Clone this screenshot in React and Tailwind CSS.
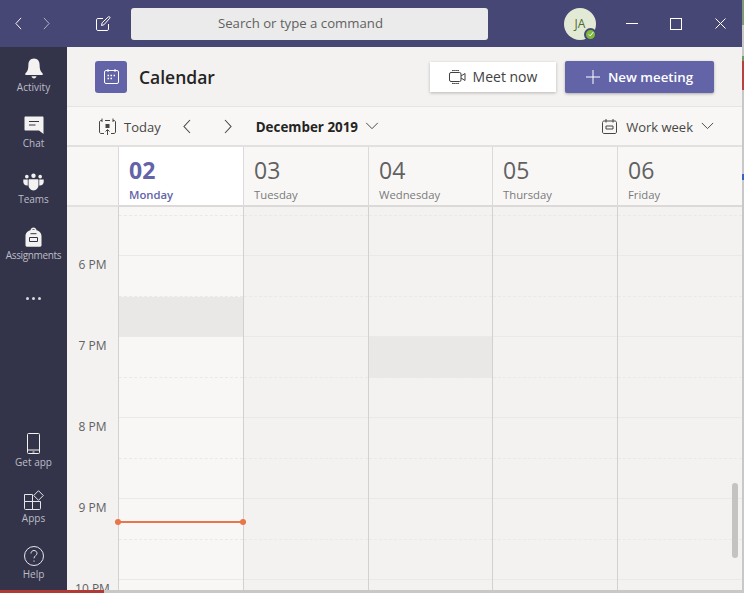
import React from 'react';

const rows = [
  { h: 'h-[9px]', line: 'border-dashed' },
  { h: 'h-[40px]', line: 'border-solid' },
  { h: 'h-[40.5px]', line: 'border-dashed', label: '6 PM' },
  { h: 'h-[40.5px]', line: 'border-solid' },
  { h: 'h-[40.5px]', line: 'border-dashed', label: '7 PM' },
  { h: 'h-[40.5px]', line: 'border-solid' },
  { h: 'h-[40.5px]', line: 'border-dashed', label: '8 PM' },
  { h: 'h-[40.5px]', line: 'border-solid' },
  { h: 'h-[40.5px]', line: 'border-dashed', label: '9 PM' },
  { h: 'h-[40.5px]', line: 'border-solid' },
  { h: 'h-[40.5px]', line: 'border-dashed', label: '10 PM' },
];

const days = [
  { num: '02', name: 'Monday', today: true, busy: 3 },
  { num: '03', name: 'Tuesday' },
  { num: '04', name: 'Wednesday', busy: 4 },
  { num: '05', name: 'Thursday' },
  { num: '06', name: 'Friday' },
];

const Chevron = ({ dir = 'down', className = '' }) => {
  const d = {
    left: 'M7 1 L1 7.5 L7 14',
    right: 'M1 1 L7 7.5 L1 14',
    down: 'M1 1 L7.5 7.5 L14 1',
  }[dir];
  const box = dir === 'down' ? '0 0 15 9' : '0 0 8 15';
  return (
    <svg viewBox={box} fill="none" stroke="currentColor" strokeWidth="1.1" className={className}>
      <path d={d} />
    </svg>
  );
};

const BellIcon = () => (
  <svg viewBox="0 0 20 21" className="w-[20px] h-[21px]" fill="#f3f2f1">
    <path d="M10 0.5c-3.6 0-5.6 2.8-5.6 6.3 0 3.6-.6 6.2-2.4 8 -.6.6-.9 1.1-.9 1.5 0 .5.4.7 1 .7h15.8c.6 0 1-.2 1-.7 0-.4-.3-.9-.9-1.5-1.8-1.8-2.4-4.4-2.4-8C15.6 3.3 13.6.5 10 .5z" />
    <path d="M7.5 18.2h5c-.3 1.3-1.3 2.2-2.5 2.2s-2.2-.9-2.5-2.2z" />
  </svg>
);

const ChatIcon = () => (
  <svg viewBox="0 0 20 19" className="w-[20px] h-[19px]">
    <path fill="#f3f2f1" d="M1.5 0.5h17c.6 0 1 .4 1 1v16.5l-4.5-3.5H1.5c-.6 0-1-.4-1-1v-12c0-.6.4-1 1-1z" />
    <path stroke="#33344a" strokeWidth="1.1" d="M5 5.5h10M5 9h6.5" />
  </svg>
);

const TeamsIcon = () => (
  <svg viewBox="0 0 22 18" className="w-[21px] h-[18px]" fill="#f3f2f1">
    <circle cx="11" cy="2.4" r="2.3" />
    <circle cx="4" cy="3.4" r="1.9" />
    <circle cx="18" cy="3.4" r="1.9" />
    <path d="M6.5 6h9c.4 0 .7.3.7.7v5.8c0 3-2.300 5.300-5.200 5.300s-5.200-2.300-5.200-5.300V6.700c0-.4.3-.7.7-.7z" />
    <path d="M.5 6.500h4.500v6.200c-2.700.4-4.700-1.500-4.700-3.900V6.700zM17 6.500h4.700v2.300c0 2.400-2 4.300-4.700 3.900z" />
  </svg>
);

const BagIcon = () => (
  <svg viewBox="0 0 17 20" className="w-[17px] h-[20px]">
    <path fill="#f3f2f1" d="M5.500 3.200C5.800 1.500 7 .5 8.500.5s2.700 1 3 2.700c2.600.8 5 2.600 5 5.800v9.300c0 .9-.6 1.400-1.400 1.400H1.900c-.8 0-1.400-.5-1.400-1.400V9c0-3.200 2.400-5 5-5.800zM7 2.900c1-.2 2-.2 3 0-.3-.7-.8-1-1.500-1s-1.200.3-1.500 1z" />
    <path fill="none" stroke="#33344a" d="M4.500 10.500h8v4h-8zM5.500 6.700h6" />
  </svg>
);

const SideItem = ({ label, icon, tall, labelClass }) => (
  <div className={`flex flex-col items-center justify-end w-full ${tall || 'h-[56px]'}`}>
    <div className="flex items-end justify-center h-[24px]">{icon}</div>
    <span className={`mt-[1px] text-[10px] leading-[14px] whitespace-nowrap text-[#bdbdc6] ${labelClass || ''}`}>
      {label}
    </span>
  </div>
);

const App = () => {
  return (
    <div className="w-[744px] h-[593px] overflow-hidden flex flex-col bg-[#c8c8c8] font-['Open_Sans',sans-serif]">
      <div className="flex h-[590px]">
        <div className="w-[742px] h-[590px] flex flex-col overflow-hidden bg-[#f3f2f1]">
          {/* title bar */}
          <div className="h-[47px] shrink-0 bg-[#464775] flex items-center text-white">
            <Chevron dir="left" className="ml-[15px] w-[7px] h-[13px]" />
            <Chevron dir="right" className="ml-[21px] w-[7px] h-[13px] opacity-60" />
            <svg viewBox="0 0 15 15" fill="none" stroke="currentColor" strokeWidth="1" className="ml-[46px] w-[15px] h-[15px]">
              <path d="M7 2.500H1.800c-.7 0-1.300.6-1.300 1.300v9.400c0 .7.6 1.300 1.300 1.300h9.400c.7 0 1.300-.6 1.300-1.300V8" />
              <path d="M5.500 9.500l.6-2.700L12.300.9c.5-.4 1-.4 1.400 0 .4.400.4 1 0 1.400L7.900 8.800z" />
            </svg>
            <div className="ml-[20px] w-[357px] h-[32px] rounded-[3px] bg-[#ebebeb] flex items-center justify-center pr-[18px] text-[13.2px] text-[#616161]">
              Search or type a command
            </div>
            <div className="relative ml-[76px] w-[32px] h-[32px] rounded-full bg-[#e2ead6] flex items-center justify-center text-[12px] text-[#4f6b2f]">
              JA
              <div className="absolute right-[-1px] bottom-[-1px] w-[13px] h-[13px] rounded-full bg-[#7fba3f] border-2 border-[#464775] flex items-center justify-center">
                <svg viewBox="0 0 8 8" fill="none" stroke="#fff" strokeWidth="1.300" className="w-[6px] h-[6px]">
                  <path d="M1 4.500l2 2 4-5" />
                </svg>
              </div>
            </div>
            <div className="ml-[30px] w-[12px] h-px bg-white" />
            <div className="ml-[32px] w-[12px] h-[12px] border border-white" />
            <svg viewBox="0 0 11 11" fill="none" stroke="currentColor" strokeWidth="1" className="ml-[33px] w-[11px] h-[11px]">
              <path d="M.5.500l10 10M10.500.500l-10 10" />
            </svg>
          </div>

          <div className="flex flex-1 min-h-0">
            {/* left rail */}
            <div className="w-[67px] shrink-0 bg-[#33344a] flex flex-col justify-between pb-[9px]">
              <div className="flex flex-col items-center">
                <SideItem label="Activity" icon={<BellIcon />} tall="h-[47px]" />
                <SideItem label="Chat" icon={<ChatIcon />} />
                <SideItem label="Teams" icon={<TeamsIcon />} />
                <SideItem label="Assignments" icon={<BagIcon />} labelClass="tracking-[-0.35px]" />
                <div className="mt-[35px] flex gap-[3px]">
                  <div className="w-[3px] h-[3px] rounded-full bg-[#d8d8de]" />
                  <div className="w-[3px] h-[3px] rounded-full bg-[#d8d8de]" />
                  <div className="w-[3px] h-[3px] rounded-full bg-[#d8d8de]" />
                </div>
              </div>
              <div className="flex flex-col items-center">
                <SideItem
                  label="Get app"
                  icon={
                    <svg viewBox="0 0 13 21" fill="none" stroke="#f3f2f1" className="w-[13px] h-[21px]">
                      <rect x=".5" y=".5" width="12" height="20" rx="1" />
                      <path d="M.5 17h12M5.500 19h2" />
                    </svg>
                  }
                />
                <SideItem
                  label="Apps"
                  icon={
                    <svg viewBox="0 0 20 20" fill="none" stroke="#e6e6ea" className="w-[20px] h-[20px]">
                      <path d="M.5 4.500h8v7h-8zM.5 11.500h8v8h-7c-.6 0-1-.4-1-1zM8.500 11.500h8v7c0 .6-.4 1-1 1h-7z" />
                      <path d="M14.500.700l4.800 4.800-4.800 4.800-4.800-4.800z" />
                    </svg>
                  }
                />
                <SideItem
                  label="Help"
                  icon={
                    <svg viewBox="0 0 20 20" fill="none" stroke="#e6e6ea" className="w-[20px] h-[20px]">
                      <circle cx="10" cy="10" r="9.500" />
                      <path d="M7 7.500c0-1.800 1.300-3 3-3s3 1.200 3 2.800c0 2.400-3 2.400-3 5" />
                      <path d="M10 14.500v1.200" />
                    </svg>
                  }
                />
              </div>
            </div>

            <div className="flex-1 min-w-0 flex flex-col">
              {/* page header */}
              <div className="h-[60px] shrink-0 border-b border-[#e6e4e2] flex items-center pl-[28px] pr-[28px]">
                <div className="w-[32px] h-[32px] rounded-[3px] bg-[#6264a7] flex items-center justify-center">
                  <svg viewBox="0 0 15 15" fill="none" stroke="#fff" className="w-[15px] h-[15px]">
                    <rect x=".5" y="1.500" width="14" height="13" rx="1.500" />
                    <path d="M4 0v3M11 0v3" />
                    <path strokeWidth="1.500" strokeDasharray="1.500 1.500" d="M3.500 6.500h8M3.500 9.500h5" />
                  </svg>
                </div>
                <h1 className="ml-[12px] text-[17.5px] leading-[24px] font-semibold text-[#252423]">Calendar</h1>
                <button className="ml-auto w-[126px] h-[30px] bg-white shadow-[0_1px_3px_rgba(0,0,0,0.25)] flex items-center justify-center gap-[7px] text-[14px] font-medium text-[#414141]">
                  <svg viewBox="0 0 17 14" fill="none" stroke="#414141" className="w-[17px] h-[14px]">
                    <rect x=".5" y="2.500" width="11.500" height="9" rx="1.500" />
                    <path d="M12 6l4-2.500v7L12 8" />
                    <path d="M3 .700c2-.5 5-.5 7 0M3 13.300c2 .5 5 .5 7 0" />
                  </svg>
                  Meet now
                </button>
                <button className="ml-[9px] w-[149px] h-[32px] rounded-[2px] bg-[#6264a7] shadow-[0_1px_3px_rgba(0,0,0,0.3)] flex items-center justify-center gap-[8px] text-[13.3px] leading-[22px] font-semibold text-white">
                  <svg viewBox="0 0 14 14" fill="none" stroke="#fff" className="w-[14px] h-[14px]">
                    <path d="M7 0v14M0 7h14" />
                  </svg>
                  <span className="mt-[1px]">New meeting</span>
                </button>
              </div>

              {/* toolbar */}
              <div className="h-[40px] shrink-0 bg-[#f8f7f6] border-b-2 border-[#e3e1df] flex items-center pl-[32px] pr-[28px] text-[13px] leading-[20px] text-[#484644]">
                <svg viewBox="0 0 17 17" fill="none" stroke="#484644" className="w-[17px] h-[17px]">
                  <path d="M3 2.500H2c-.8 0-1.500.7-1.500 1.500v10c0 .8.7 1.500 1.500 1.500h3M12 15.500h3c.8 0 1.500-.7 1.500-1.500V4c0-.8-.7-1.500-1.500-1.500h-1M3 .5v3.500M14 .5v3.500M6 2.500h5" />
                  <rect x="7" y="6.500" width="3" height="3" fill="#484644" />
                  <path d="M8.500 17v-5M6.500 13.500l2-2 2 2" />
                </svg>
                <span className="ml-[8px] mt-[1px]">Today</span>
                <Chevron dir="left" className="ml-[22px] w-[8px] h-[15px]" />
                <Chevron dir="right" className="ml-[33px] w-[8px] h-[15px]" />
                <span className="ml-[24px] mt-[1px] font-bold text-[#252423] whitespace-nowrap text-[13.4px]">December 2019</span>
                <Chevron className="ml-[7px] w-[14px] h-[8px]" />
                <svg viewBox="0 0 15 15" fill="none" stroke="#484644" className="ml-auto w-[15px] h-[15px]">
                  <path d="M2 2h11c.8 0 1.500.7 1.500 1.500v9.500c0 .8-.7 1.500-1.500 1.500H2c-.8 0-1.500-.7-1.500-1.500V3.500C.5 2.700 1.200 2 2 2zM4 0v3.500M11 0v3.500M4 7h7v3H4z" />
                </svg>
                <span className="ml-[9px] mt-[1px] whitespace-nowrap">Work week</span>
                <Chevron className="ml-[8px] w-[13px] h-[8px]" />
              </div>

              {/* week */}
              <div className="relative flex-1 min-h-0 overflow-hidden">
                <div className="grid grid-cols-[51px_125px_125px_124px_125px_125px]">
                  <div className="h-[60px] border-b-2 border-[#e3e1df] bg-[#f8f7f6]" />
                  {days.map((d) => (
                    <div
                      key={d.num}
                      className={`h-[60px] border-b-2 border-l border-[#dcdad8] pl-[10px] pt-[8px] ${d.today ? 'bg-white' : 'bg-[#f8f7f6]'}`}
                    >
                      <div className={`text-[23px] leading-[30px] ${d.today ? 'font-bold text-[#6264a7]' : 'text-[#616161]'}`}>{d.num}</div>
                      <div className={`mt-[1px] text-[11.3px] leading-[18px] ${d.today ? 'font-semibold text-[#6264a7]' : 'text-[#7a7a7a]'}`}>{d.name}</div>
                    </div>
                  ))}

                  <div className="flex flex-col">
                    {rows.map((r, i) => (
                      <div key={i} className={`${r.h} shrink-0 pt-[1px] text-center text-[12px] leading-[16px] text-[#616161]`}>
                        {r.label}
                      </div>
                    ))}
                  </div>
                  {days.map((d) => (
                    <div key={d.num} className={`flex flex-col border-l border-[#d3d1cf] ${d.today ? 'bg-[#f8f7f6]' : 'bg-[#f3f2f1]'}`}>
                      {rows.map((r, i) => (
                        <div key={i} className={`${r.h} shrink-0 border-b border-[#ebe9e7] ${r.line} ${d.busy === i ? 'bg-[#e9e8e7]' : ''}`} />
                      ))}
                    </div>
                  ))}
                </div>

                {/* current time */}
                <div className="absolute left-[48px] top-[374px] w-[131px] h-[2px] bg-[#e97548]">
                  <div className="absolute left-0 top-[-2px] w-[6px] h-[6px] rounded-full bg-[#e97548]" />
                  <div className="absolute right-0 top-[-2px] w-[6px] h-[6px] rounded-full bg-[#e97548]" />
                </div>

                {/* scrollbar */}
                <div className="absolute right-[4px] top-[336px] w-[6px] h-[75px] rounded-full bg-[#c4c3c2]" />
              </div>
            </div>
          </div>
        </div>

        {/* desktop behind the window */}
        <div className="w-[2px] flex flex-col">
          <div className="h-[25px] bg-[#7f9a78]" />
          <div className="h-[31px] bg-[#c8c8c8]" />
          <div className="h-[5px] bg-[#6f9a66]" />
          <div className="h-[29px] bg-[#b84040]" />
          <div className="h-[84px] bg-[#c8c8c8]" />
          <div className="h-[6px] bg-[#3a62c0]" />
          <div className="flex-1 bg-[#c8c8c8]" />
        </div>
      </div>
      <div className="h-[3px] flex">
        <div className="w-[104px] bg-[#b13a36]" />
        <div className="flex-1 bg-[#c8c8c8]" />
      </div>
    </div>
  );
};

export default App;
